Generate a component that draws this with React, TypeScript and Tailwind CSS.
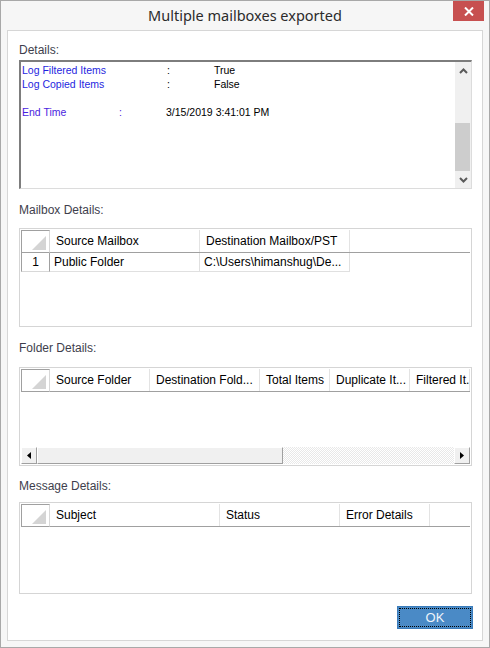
import React from "react";

const F = { fontFamily: '"Liberation Sans", Arial, sans-serif' };

function VScroll() {
  return (
    <div className="flex w-[16px] flex-col bg-[#f0f0f0]">
      <div className="flex h-[17px] items-center justify-center">
        <svg width="9" height="6" viewBox="0 0 9 6">
          <polyline points="1,5 4.5,1.5 8,5" fill="none" stroke="#5a5a5a" strokeWidth="2" />
        </svg>
      </div>
      <div className="flex flex-1 flex-col">
        <div className="h-[44px]" />
        <div className="mr-[1px] h-[48px] bg-[#cdcdcd]" />
        <div className="flex-1" />
      </div>
      <div className="flex h-[17px] items-center justify-center">
        <svg width="9" height="6" viewBox="0 0 9 6">
          <polyline points="1,1 4.5,4.5 8,1" fill="none" stroke="#5a5a5a" strokeWidth="2" />
        </svg>
      </div>
    </div>
  );
}

function Corner() {
  return (
    <div className="flex h-full w-[29px] shrink-0 items-end justify-end border-l border-t border-b border-r border-l-[#a0a0a0] border-t-[#a0a0a0] border-b-[#a0a0a0] border-r-[#d8d8d8] bg-white pb-[2px] pr-[3px]">
      <svg width="14" height="14" viewBox="0 0 14 14">
        <polygon points="14,0 14,14 0,14" fill="#d4d4d4" />
      </svg>
    </div>
  );
}

type Col = { label: string; w: number };

function HScroll() {
  return (
    <div className="flex h-[17px] shrink-0">
      <div className="flex w-[16px] items-center justify-center border border-t-white border-l-white border-r-[#a0a0a0] border-b-[#a0a0a0] bg-[#f0f0f0]">
        <svg width="4" height="7" viewBox="0 0 4 7">
          <polygon points="4,0 4,7 0,3.5" fill="#000" />
        </svg>
      </div>
      <div className="w-[246px] border border-t-white border-l-white border-r-[#a0a0a0] border-b-[#a0a0a0] bg-[#f0f0f0]" />
      <div className="flex-1 bg-[repeating-conic-gradient(#e8e8e8_0_25%,#ffffff_0_50%)] bg-[length:2px_2px]" />
      <div className="flex w-[16px] items-center justify-center border border-t-white border-l-white border-r-[#a0a0a0] border-b-[#a0a0a0] bg-[#f0f0f0]">
        <svg width="4" height="7" viewBox="0 0 4 7">
          <polygon points="0,0 0,7 4,3.5" fill="#000" />
        </svg>
      </div>
    </div>
  );
}

function Grid({
  cols,
  rows,
  height,
  hscroll,
}: {
  cols: Col[];
  rows?: string[][];
  height: string;
  hscroll?: boolean;
}) {
  return (
    <div className={`${height} flex flex-col border border-[#d5d5d5] bg-white p-[1px]`} style={F}>
      <div className="flex h-[23px] shrink-0 overflow-hidden">
        <Corner />
        <div className="flex flex-1 overflow-hidden border-b border-[#a0a0a0]">
          {cols.map((c) => (
            <div
              key={c.label}
              style={{ width: c.w }}
              className="flex shrink-0 items-center overflow-hidden whitespace-nowrap border-r border-[#e3e3e3] pl-[6px] text-[12px] text-black"
            >
              {c.label}
            </div>
          ))}
        </div>
      </div>
      <div className="flex-1">
        {rows?.map((r, i) => (
          <div key={i} className="flex h-[19px]">
            <div className="flex w-[29px] shrink-0 items-center justify-center border-l border-r border-b border-l-[#a0a0a0] border-r-[#a0a0a0] border-b-[#d8d8d8] text-[12px] text-black">
              {i + 1}
            </div>
            {r.map((cell, j) => (
              <div
                key={j}
                style={{ width: cols[j].w }}
                className="flex shrink-0 items-center overflow-hidden whitespace-nowrap border-r border-b border-[#e0e0e0] pl-[4px] text-[12px] text-black"
              >
                {cell}
              </div>
            ))}
          </div>
        ))}
      </div>
      {hscroll && <HScroll />}
    </div>
  );
}

function Label({ children, cls }: { children: React.ReactNode; cls: string }) {
  return (
    <div className={`${cls} text-[12px] leading-[14px] text-[#3e3e4c]`} style={F}>
      {children}
    </div>
  );
}

export default function App() {
  return (
    <div className="flex h-[648px] w-[490px] flex-col border border-[#a8a8a8] bg-[#f6f6f6]">
      <div className="grid h-[29px] shrink-0 grid-cols-[1fr_auto_1fr]">
        <div />
        <div
          className="pt-[4px] text-[14.5px] leading-[20px] text-[#2b2b2b]"
          style={{ fontFamily: '"Noto Sans", "Open Sans", sans-serif' }}
        >
          Multiple mailboxes exported
        </div>
        <div className="flex justify-end pr-[5px]">
          <div className="flex h-[20px] w-[31px] items-center justify-center bg-[#c75050]">
            <svg width="10" height="9" viewBox="0 0 10 9">
              <path d="M1 0.5 L9 8.5 M9 0.5 L1 8.5" stroke="#ffffff" strokeWidth="2" />
            </svg>
          </div>
        </div>
      </div>

      <div className="mx-[6px] flex h-[611px] shrink-0 flex-col border border-[#d6d6d6] bg-white pl-[11px] pr-[10px]">
        <Label cls="pt-[12px] pb-[3px]">Details:</Label>
        <div className="flex h-[129px] shrink-0 border-t-2 border-l-2 border-r border-b border-t-[#7d7d7d] border-l-[#7d7d7d] border-r-[#dcdcdc] border-b-[#dcdcdc] bg-white">
          <div className="flex-1 pl-[1px] pt-[1px] text-[10.5px] leading-[14px]" style={F}>
            <div className="flex">
              <span className="w-[145px] text-[#1f1fe0]">Log Filtered Items</span>
              <span className="w-[47px] text-black">:</span>
              <span className="text-black">True</span>
            </div>
            <div className="flex">
              <span className="w-[145px] text-[#1f1fe0]">Log Copied Items</span>
              <span className="w-[47px] text-black">:</span>
              <span className="text-black">False</span>
            </div>
            <div className="h-[14px]" />
            <div className="flex">
              <span className="w-[97px] text-[#4a1ee0]">End Time</span>
              <span className="w-[47px] text-[#4a1ee0]">:</span>
              <span className="text-black">3/15/2019 3:41:01 PM</span>
            </div>
          </div>
          <VScroll />
        </div>

        <Label cls="pt-[14px] pb-[11px]">Mailbox Details:</Label>
        <Grid
          height="h-[99px] shrink-0"
          cols={[
            { label: "Source Mailbox", w: 150 },
            { label: "Destination Mailbox/PST", w: 150 },
          ]}
          rows={[["Public Folder", "C:\\Users\\himanshug\\De..."]]}
        />

        <Label cls="pt-[14px] pb-[12px]">Folder Details:</Label>
        <Grid
          height="h-[99px] shrink-0"
          hscroll
          cols={[
            { label: "Source Folder", w: 100 },
            { label: "Destination Fold...", w: 110 },
            { label: "Total Items", w: 70 },
            { label: "Duplicate It...", w: 80 },
            { label: "Filtered It.", w: 60 },
          ]}
        />

        <Label cls="pt-[13px] pb-[9px]">Message Details:</Label>
        <Grid
          height="h-[92px] shrink-0"
          cols={[
            { label: "Subject", w: 170 },
            { label: "Status", w: 120 },
            { label: "Error Details", w: 90 },
          ]}
        />

        <div className="flex justify-end pt-[12px]">
          <button
            className="mr-[-1px] flex h-[23px] w-[76px] items-center justify-center border border-[#3c7cba] bg-[#4a8ac6] text-[13px] text-[#eef4fa] outline-1 outline-dotted outline-black outline-offset-[-3px]"
            style={F}
          >
            OK
          </button>
        </div>
      </div>
    </div>
  );
}
